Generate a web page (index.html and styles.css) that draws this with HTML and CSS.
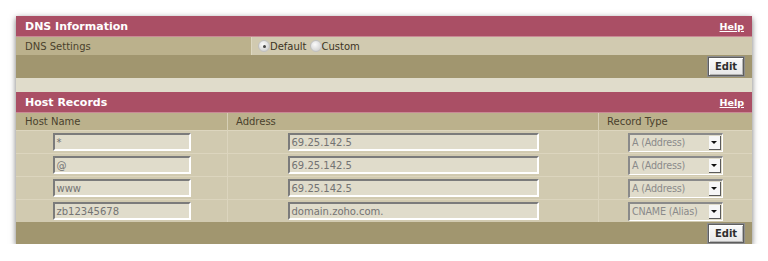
FILE: index.html
```html
<!DOCTYPE html>
<html>
<head>
<meta charset="utf-8">
<link rel="stylesheet" href="styles.css">
</head>
<body>
<div class="panel">
  <div class="head"><span class="title">DNS Information</span><a class="help" href="#">Help</a></div>
  <div class="settings">
    <div class="label">DNS Settings</div>
    <div class="choice">
      <label class="radio"><span class="dot on"></span>Default</label>
      <label class="radio"><span class="dot"></span>Custom</label>
    </div>
  </div>
  <div class="band"><button class="edit">Edit</button></div>
  <div class="spacer"></div>
  <div class="head"><span class="title">Host Records</span><a class="help" href="#">Help</a></div>
  <div class="grid">
    <div class="ch">Host Name</div><div class="ch">Address</div><div class="ch">Record Type</div>

    <div class="cell"><div class="field host">*</div></div>
    <div class="cell"><div class="field addr">69.25.142.5</div></div>
    <div class="cell"><div class="select"><span>A (Address)</span><i class="arrow"></i></div></div>

    <div class="cell"><div class="field host">@</div></div>
    <div class="cell"><div class="field addr">69.25.142.5</div></div>
    <div class="cell"><div class="select"><span>A (Address)</span><i class="arrow"></i></div></div>

    <div class="cell"><div class="field host">www</div></div>
    <div class="cell"><div class="field addr">69.25.142.5</div></div>
    <div class="cell"><div class="select"><span>A (Address)</span><i class="arrow"></i></div></div>

    <div class="cell"><div class="field host">zb12345678</div></div>
    <div class="cell"><div class="field addr">domain.zoho.com.</div></div>
    <div class="cell"><div class="select"><span>CNAME (Alias)</span><i class="arrow"></i></div></div>
  </div>
  <div class="band bottom"><button class="edit">Edit</button></div>
</div>
</body>
</html>
```
FILE: styles.css
```css
html, body {
  margin: 0;
  padding: 0;
  background: #ffffff;
}
body {
  padding: 16px 16px 0 16px;
  font-family: "DejaVu Sans", Verdana, sans-serif;
  font-size: 10px;
}
.panel {
  width: 736px;
  background: #e0dccb;
  box-shadow: 0 2px 6px rgba(0, 0, 0, 0.55);
}
.head {
  height: 20px;
  background: #aa4f65;
  border-bottom: 1px solid #c98a96;
  display: flex;
  align-items: center;
  justify-content: space-between;
  padding: 0 8px 0 9px;
}
.title {
  color: #ffffff;
  font-weight: bold;
  font-size: 11px;
}
.help {
  color: #ffffff;
  font-weight: bold;
  font-size: 9.5px;
  text-decoration: underline;
}
.settings {
  display: flex;
  height: 18px;
}
.settings .label {
  width: 226px;
  background: #bbb18c;
  color: #4a412d;
  padding-left: 9px;
  display: flex;
  align-items: center;
  font-size: 10px;
}
.choice {
  flex: 1;
  background: #d1cab0;
  border-left: 1px solid #ddd7c0;
  display: flex;
  align-items: center;
  padding-left: 6px;
  gap: 3px;
  color: #3c3424;
  font-size: 10px;
}
.radio {
  display: flex;
  align-items: center;
}
.dot {
  width: 12px;
  height: 12px;
  border-radius: 50%;
  background: radial-gradient(circle at 40% 35%, #fbfbfb, #d6d6d6 70%, #c4c4c4);
  border: 1px solid #c0c0c0;
  box-sizing: border-box;
  position: relative;
  margin-right: 0;
}
.dot.on::after {
  content: "";
  position: absolute;
  left: 4px;
  top: 4px;
  width: 3px;
  height: 3px;
  border-radius: 50%;
  background: #444;
}
.band {
  height: 23px;
  background: #a1966f;
  display: flex;
  align-items: center;
  justify-content: flex-end;
  padding-right: 8px;
}
.edit {
  height: 19px;
  width: 36px;
  padding: 0;
  font-family: "DejaVu Sans", Verdana, sans-serif;
  font-size: 10px;
  font-weight: bold;
  color: #2e2e2e;
  background: linear-gradient(#fbfbfb, #e6e6e6);
  border: 1px solid #5e5e5e;
  box-shadow: inset 1px 1px 0 #ffffff, inset -1px -1px 0 #b5b5b5, 0 0 0 1px #8d8d8d;
}
.spacer {
  height: 14px;
  background: #e0dccb;
}
.grid {
  display: grid;
  grid-template-columns: 211px 371px 154px;
  background: #d1cab0;
}
.ch {
  height: 17px;
  background: #bbb18c;
  color: #4a412d;
  padding-left: 8px;
  display: flex;
  align-items: center;
  border-bottom: 1px solid #ddd6bf;
  border-left: 1px solid #d6cfb5;
  font-size: 10px;
}
.ch:first-child {
  border-left: none;
  padding-left: 9px;
}
.cell {
  height: 22px;
  border-bottom: 1px solid #dcd5be;
  border-left: 1px solid #dcd5be;
  display: flex;
  align-items: center;
  justify-content: center;
}
.cell:nth-child(3n+1) {
  border-left: none;
}
.grid .cell:nth-last-child(-n+3) {
  border-bottom: none;
}
.field {
  height: 18px;
  box-sizing: border-box;
  background: #e0dccb;
  border-top: 2px solid #7b7b7b;
  border-left: 2px solid #7b7b7b;
  border-right: 2px solid #ffffff;
  border-bottom: 2px solid #ffffff;
  color: #737373;
  font-size: 10px;
  display: flex;
  align-items: center;
  padding-left: 2px;
}
.host { width: 138px; }
.addr { width: 251px; }
.select {
  width: 95px;
  height: 19px;
  box-sizing: border-box;
  background: #e0dccb;
  border-top: 2px solid #8a8a8a;
  border-left: 2px solid #8a8a8a;
  border-right: 1px solid #ffffff;
  border-bottom: 1px solid #ffffff;
  color: #8a8a8a;
  font-size: 9.6px;
  letter-spacing: -0.2px;
  display: flex;
  align-items: center;
  justify-content: space-between;
  padding-left: 2px;
  white-space: nowrap;
}
.arrow {
  width: 12px;
  height: 14px;
  margin-right: 1px;
  background: #f7f7f7;
  border-right: 1px solid #5a5a5a;
  border-bottom: 1px solid #5a5a5a;
  box-sizing: border-box;
  position: relative;
  flex: none;
}
.arrow::after {
  content: "";
  position: absolute;
  left: 2px;
  top: 5px;
  border-left: 3px solid transparent;
  border-right: 3px solid transparent;
  border-top: 3px solid #111;
}
.bottom {
  height: 22px;
}
```
